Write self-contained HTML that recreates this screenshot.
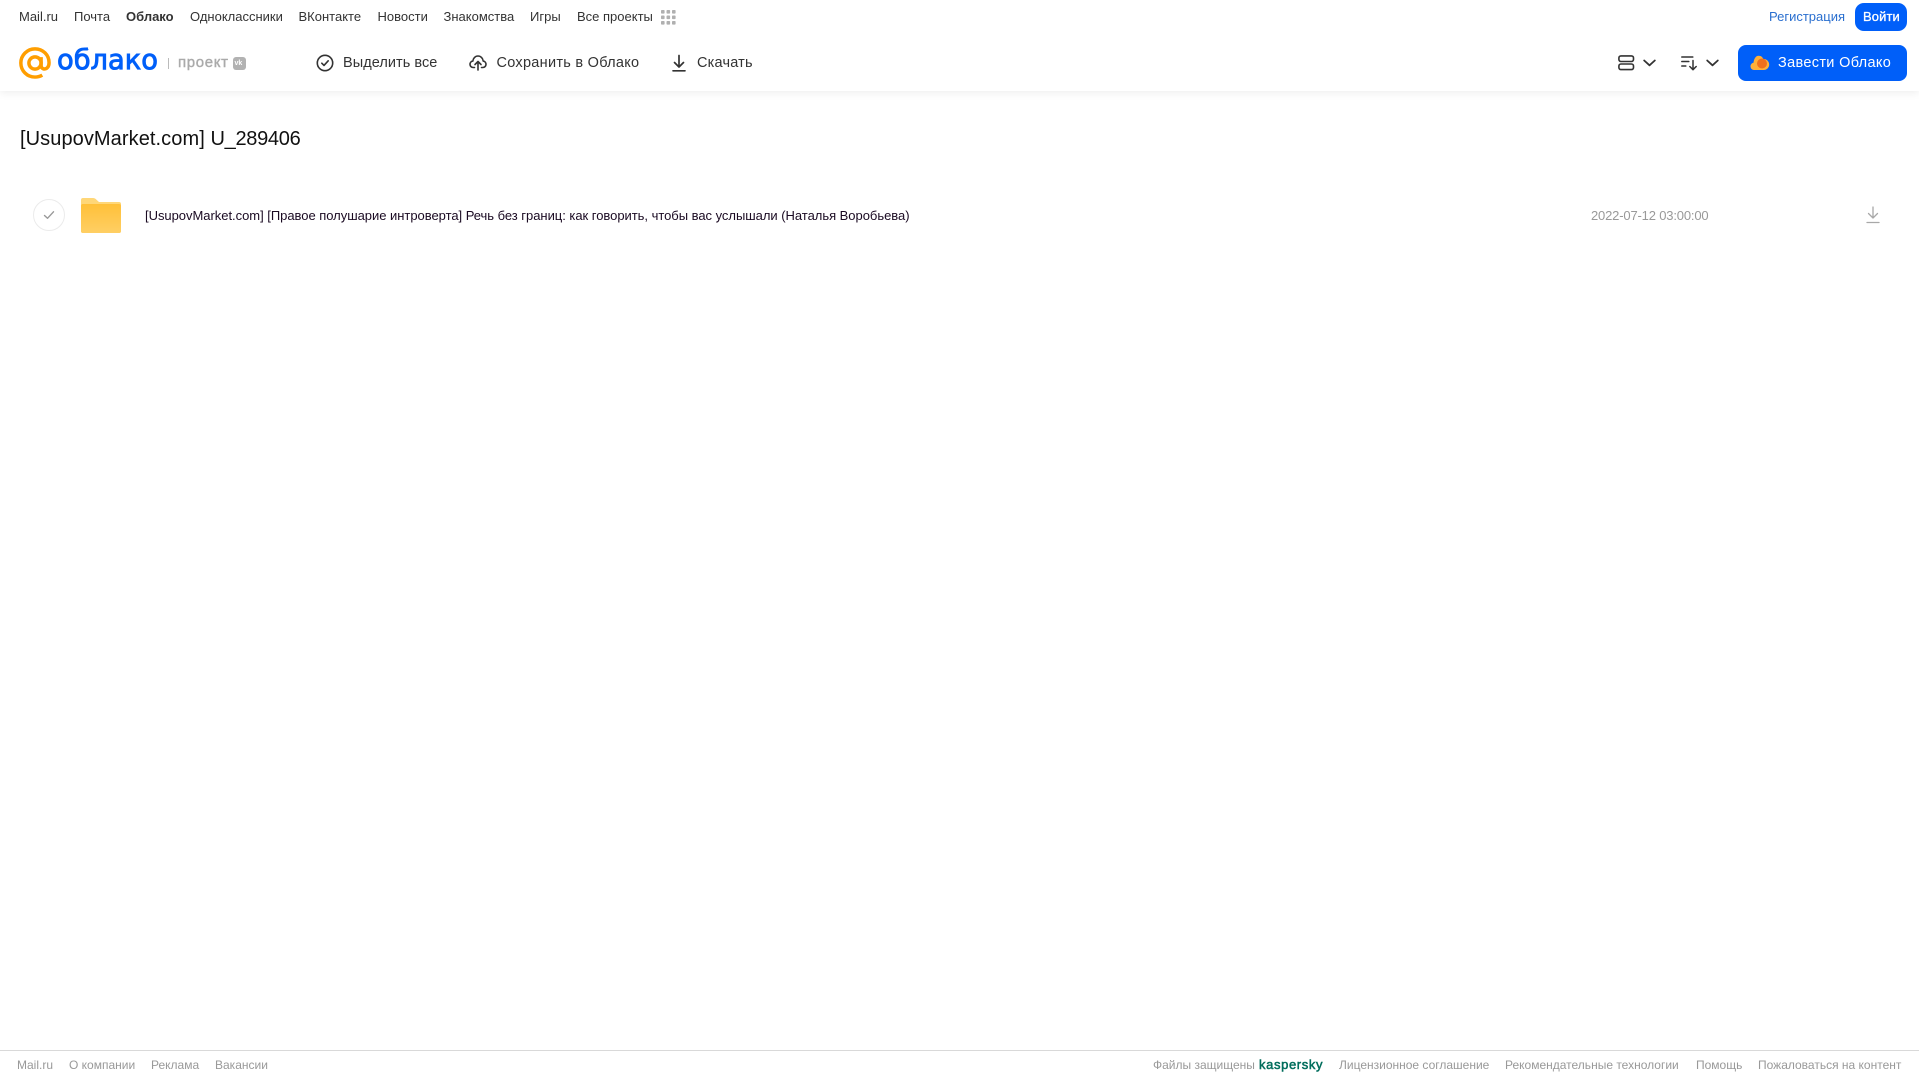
<!DOCTYPE html>
<html lang="ru">
<head>
<meta charset="utf-8">
<title>Облако</title>
<style>
html,body{margin:0;padding:0;background:#fff;width:1919px;height:1079px;overflow:hidden}
body{position:relative;font-family:"Liberation Sans",sans-serif}
.t{position:absolute;white-space:nowrap;line-height:1}
.nav{font-size:13px;top:10px;color:#333}
.tb{font-size:14.5px;top:56px;color:#333}
.ft{font-size:12px;top:1059px;color:#999}
svg{position:absolute;overflow:visible}
</style>
</head>
<body>
<div style="position:absolute;left:0;top:0;width:1919px;height:91px;background:#fff;box-shadow:0 2px 8px rgba(0,0,0,.07)"></div>

<span class="t nav" style="left:19px">Mail.ru</span>
<span class="t nav" style="left:74px">Почта</span>
<span class="t nav" style="left:126px;font-weight:bold">Облако</span>
<span class="t nav" style="left:190px">Одноклассники</span>
<span class="t nav" style="left:298.5px">ВКонтакте</span>
<span class="t nav" style="left:377.5px">Новости</span>
<span class="t nav" style="left:443.5px">Знакомства</span>
<span class="t nav" style="left:530px">Игры</span>
<span class="t nav" style="left:577px">Все проекты</span>
<svg style="left:661px;top:10px" width="15" height="15" viewBox="0 0 15 15" fill="#b0b0b0">
<rect x="0" y="0" width="3.6" height="3.6" rx=".8"/><rect x="5.5" y="0" width="3.6" height="3.6" rx=".8"/><rect x="11" y="0" width="3.6" height="3.6" rx=".8"/>
<rect x="0" y="5.5" width="3.6" height="3.6" rx=".8"/><rect x="5.5" y="5.5" width="3.6" height="3.6" rx=".8"/><rect x="11" y="5.5" width="3.6" height="3.6" rx=".8"/>
<rect x="0" y="11" width="3.6" height="3.6" rx=".8"/><rect x="5.5" y="11" width="3.6" height="3.6" rx=".8"/><rect x="11" y="11" width="3.6" height="3.6" rx=".8"/>
</svg>

<span class="t nav" style="left:1769px;color:#2a6fcf">Регистрация</span>
<div style="position:absolute;left:1855px;top:3px;width:52px;height:28px;background:#005ff9;border-radius:9px"></div>
<span class="t nav" style="left:1863px;color:#fff;-webkit-text-stroke:.3px #fff;letter-spacing:.1px">Войти</span>

<!-- Logo -->
<svg style="left:19px;top:47px" width="32" height="32" viewBox="0 0 33 33" fill="none" stroke="#ff9e00" stroke-width="3.6">
<circle cx="16.5" cy="16.5" r="6.3"/>
<path d="M22.8 10.5v8.2c0 2.6 1.6 4 3.5 4 2.4 0 4.7-2.4 4.7-6.5C31 8 24.5 1.9 16.5 1.9S1.9 8.4 1.9 16.5 8.4 31 16.5 31c3 0 5.3-.7 7.5-2"/>
</svg>
<span class="t" style="left:57px;top:46px;font-size:28px;color:#005ff9;-webkit-text-stroke:.9px #005ff9;font-family:'DejaVu Sans',sans-serif;transform-origin:0 50%;transform:scaleX(.975)">облако</span>
<div style="position:absolute;left:168px;top:58px;width:1px;height:11px;background:#bbb"></div>
<span class="t" style="left:178px;top:55px;font-size:15px;color:#aaa;-webkit-text-stroke:.4px #aaa;letter-spacing:.65px">проект</span>
<div style="position:absolute;left:233px;top:57px;width:13px;height:13px;background:#b2b2b2;border-radius:3px"></div>
<span class="t" style="left:234.5px;top:60px;font-size:7px;font-weight:bold;color:#fff">vk</span>

<!-- Toolbar -->
<svg style="left:316px;top:54px" width="18" height="18" viewBox="0 0 18 18" fill="none" stroke="#333" stroke-width="1.6" stroke-linecap="round" stroke-linejoin="round">
<circle cx="9" cy="9" r="7.7"/><path d="M5.8 9.2l2.2 2.2 4.2-4.6"/>
</svg>
<span class="t tb" style="left:343px;letter-spacing:.05px">Выделить все</span>
<svg style="left:469px;top:53px" width="18" height="18" viewBox="0 0 18 18" fill="none" stroke="#333" stroke-width="1.6" stroke-linecap="round" stroke-linejoin="round">
<path d="M5.5 14.5H4.2C2.3 14.5 1 13 1 11.3c0-1.6 1.2-3 2.8-3.2C4.2 5.2 6.3 3 9 3s4.9 2.2 5.2 5.1c1.6.2 2.8 1.6 2.8 3.2 0 1.7-1.3 3.2-3.2 3.2h-1.3"/>
<path d="M9 17V9M6 11.5l3-3 3 3"/>
</svg>
<span class="t tb" style="left:496.5px;letter-spacing:.28px">Сохранить в Облако</span>
<svg style="left:670px;top:54px" width="18" height="18" viewBox="0 0 18 18" fill="none" stroke="#333" stroke-width="1.7" stroke-linecap="round" stroke-linejoin="round">
<path d="M9 1.5v11M4.5 8.5L9 13l4.5-4.5M3 16.8h12"/>
</svg>
<span class="t tb" style="left:697px;letter-spacing:.2px">Скачать</span>

<!-- Right tools -->
<svg style="left:1618px;top:55px" width="17" height="16" viewBox="0 0 17 16" fill="none" stroke="#333" stroke-width="1.6">
<rect x=".9" y=".9" width="14.6" height="5.6" rx="2"/><rect x=".9" y="9" width="14.6" height="5.6" rx="2"/>
</svg>
<svg style="left:1643px;top:59px" width="13" height="8" viewBox="0 0 13 8" fill="none" stroke="#333" stroke-width="1.8" stroke-linecap="round" stroke-linejoin="round"><path d="M1.2 1.5l5.3 4.8 5.3-4.8"/></svg>
<svg style="left:1681px;top:56px" width="17" height="15" viewBox="0 0 17 15" fill="none" stroke="#333" stroke-width="1.5" stroke-linecap="round" stroke-linejoin="round">
<path d="M.8 1h11M.8 5.5h7M.8 10h4M12 4.5v9M8.8 10.5l3.2 3.2 3.2-3.2"/>
</svg>
<svg style="left:1706px;top:59px" width="13" height="8" viewBox="0 0 13 8" fill="none" stroke="#333" stroke-width="1.8" stroke-linecap="round" stroke-linejoin="round"><path d="M1.2 1.5l5.3 4.8 5.3-4.8"/></svg>

<div style="position:absolute;left:1738px;top:45px;width:169px;height:36px;background:#005ff9;border-radius:8px"></div>
<svg style="left:1750px;top:54px" width="20" height="17" viewBox="0 0 20 17">
<path d="M4 16C1.8 16 .5 14.3 .5 12.3c0-1.9 1.3-3.3 3-3.6C4 5 5.5 1.8 8.7 1.8c2.3 0 3.9 1.4 4.5 3.2 3.2-.3 6 2.3 6 5.5 0 3-2.3 5.5-5.5 5.5z" fill="#ffb03a"/>
<circle cx="12" cy="9.5" r="5" fill="#f0701e"/>
</svg>
<span class="t" style="left:1778px;top:56px;font-size:14.5px;color:#fff;letter-spacing:.33px">Завести Облако</span>

<!-- Title -->
<span class="t" style="left:20px;top:129px;font-size:20px;color:#111;letter-spacing:.08px">[UsupovMarket.com]</span>
<span class="t" style="left:210.5px;top:129px;font-size:20px;color:#111;letter-spacing:-.3px">U_289406</span>

<!-- Row -->
<div style="position:absolute;left:33px;top:199px;width:30px;height:30px;border:1px solid #ebebeb;border-radius:50%"></div>
<svg style="left:43px;top:210px" width="12" height="10" viewBox="0 0 12 10" fill="none" stroke="#999" stroke-width="1.4" stroke-linecap="round" stroke-linejoin="round"><path d="M1.5 5.5l3 2.8 6-6.5"/></svg>
<svg style="left:81px;top:198px" width="40" height="35" viewBox="0 0 40 35">
<defs><linearGradient id="g" x1="0" y1="0" x2="0" y2="1"><stop offset="0" stop-color="#ffc039"/><stop offset="1" stop-color="#ffcf64"/></linearGradient></defs>
<path d="M2 0h10c1.5 0 2.5.6 3.5 1.8L18 4h20a2 2 0 0 1 2 2v27a2 2 0 0 1-2 2H2a2 2 0 0 1-2-2V2a2 2 0 0 1 2-2z" fill="#ffd778"/>
<path d="M0 8a2 2 0 0 1 2-2h36a2 2 0 0 1 2 2v25a2 2 0 0 1-2 2H2a2 2 0 0 1-2-2z" fill="url(#g)"/>
</svg>
<span class="t" style="left:145px;top:209px;font-size:13px;color:#1a0a22;letter-spacing:-.03px">[UsupovMarket.com] [Правое полушарие интроверта] Речь без границ: как говорить, чтобы вас услышали (Наталья Воробьева)</span>
<span class="t" style="left:1591px;top:209px;font-size:13px;color:#999;letter-spacing:-.17px">2022-07-12 03:00:00</span>
<svg style="left:1866px;top:206px" width="14" height="18" viewBox="0 0 14 18" fill="none" stroke="#a8a8a8" stroke-width="1.3" stroke-linecap="round" stroke-linejoin="round">
<path d="M7 1v10.5M2.5 7.5L7 12l4.5-4.500M1 16.500h12"/>
</svg>

<!-- Footer -->
<div style="position:absolute;left:0;top:1050px;width:1919px;height:1px;background:#d9d9d9"></div>
<span class="t ft" style="left:17px">Mail.ru</span>
<span class="t ft" style="left:69px">О компании</span>
<span class="t ft" style="left:151px">Реклама</span>
<span class="t ft" style="left:215px">Вакансии</span>
<span class="t ft" style="left:1153px">Файлы защищены</span>
<span class="t" style="left:1259px;top:1058px;font-size:13px;color:#006d5c;-webkit-text-stroke:.5px #006d5c;letter-spacing:.62px">kaspersky</span>
<span class="t ft" style="left:1339px">Лицензионное соглашение</span>
<span class="t ft" style="left:1505px">Рекомендательные технологии</span>
<span class="t ft" style="left:1696px">Помощь</span>
<span class="t ft" style="left:1758px">Пожаловаться на контент</span>
</body>
</html>
